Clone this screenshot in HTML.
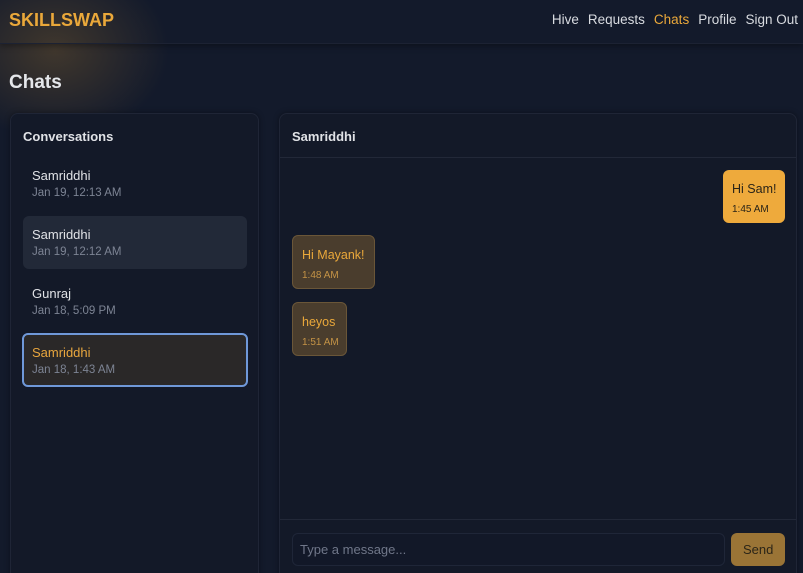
<!DOCTYPE html>
<html><head><style>
*{box-sizing:border-box;margin:0;padding:0}
html,body{width:803px;height:573px;overflow:hidden}
body{background:#131a2b;font-family:"Liberation Sans",sans-serif;position:relative;color:#e5e7eb}
.glow{position:absolute;left:-60px;top:-40px;width:230px;height:180px;border-radius:50%;background:radial-gradient(ellipse at center,rgba(180,130,50,0.28),rgba(180,130,50,0) 70%)}
.nav{position:absolute;left:0;top:0;width:803px;height:44px;border-bottom:1px solid #1c2233;box-shadow:0 2px 6px rgba(0,0,0,0.35)}
.logo{position:absolute;left:9px;top:10px;font-size:18px;font-weight:bold;color:#eaa83a}
.links{position:absolute;right:5px;top:12px;font-size:13.5px;color:#d8dbe0;white-space:nowrap}
.links span{margin-left:9px}
h1{position:absolute;left:9px;top:72px;font-size:19px;color:#e5e7eb}
.panel{position:absolute;top:113px;height:470px;background:#131928;border:1px solid #1f2536;border-radius:8px;box-shadow:0 0 6px rgba(0,0,0,0.4)}
.item{position:absolute;left:12px;width:224px;height:53px;border-radius:6px;padding:11px 9px}
.n{font-size:13px;color:#e0e2e6}
.d{font-size:11.5px;color:#7d8494;margin-top:4px}
.b{position:absolute;border-radius:6px;padding:12px 9px;font-size:12.5px;white-space:nowrap}
.b .t{font-size:10px;margin-top:8px}
</style></head><body>
<div class="glow"></div>
<div class="nav"><div class="logo">SKILLSWAP</div>
<div class="links"><span>Hive</span><span>Requests</span><span style="color:#eaa83a">Chats</span><span>Profile</span><span>Sign Out</span></div></div>
<h1>Chats</h1>
<div class="panel" style="left:10px;width:249px">
<div style="position:absolute;left:12px;top:15px;font-size:13px;font-weight:bold;color:#e0e2e6">Conversations</div>
<div class="item" style="top:43px"><div class="n">Samriddhi</div><div class="d">Jan 19, 12:13 AM</div></div>
<div class="item" style="top:102px;background:#222938"><div class="n">Samriddhi</div><div class="d">Jan 19, 12:12 AM</div></div>
<div class="item" style="top:161px"><div class="n">Gunraj</div><div class="d">Jan 18, 5:09 PM</div></div>
<div class="item" style="top:219px;background:#2a2828;border:2px solid #6f98d8;height:54px;left:11px;width:226px;padding:10px 8px"><div class="n" style="color:#e8a63e">Samriddhi</div><div class="d">Jan 18, 1:43 AM</div></div>
</div>
<div class="panel" style="left:279px;width:518px">
<div style="position:absolute;left:12px;top:15px;font-size:13px;font-weight:bold;color:#e0e2e6">Samriddhi</div>
<div style="position:absolute;left:0;top:43px;width:100%;border-top:1px solid #222838"></div>
<div class="b" style="left:443px;top:56px;width:62px;height:53px;background:#eeaa3c;color:#2a2418">Hi Sam!<div class="t">1:45 AM</div></div>
<div class="b" style="left:12px;top:121px;width:83px;height:54px;background:#4a3d2d;border:1px solid #6a5638;color:#eaa83a">Hi Mayank!<div class="t" style="color:#c49346">1:48 AM</div></div>
<div class="b" style="left:12px;top:188px;width:55px;height:54px;background:#4a3d2d;border:1px solid #6a5638;color:#eaa83a">heyos<div class="t" style="color:#c49346">1:51 AM</div></div>
<div style="position:absolute;left:0;top:405px;width:100%;border-top:1px solid #222838"></div>
<div style="position:absolute;left:12px;top:419px;width:433px;height:33px;border:1px solid #1f2638;border-radius:6px;background:#121828;font-size:13px;color:#707789;padding:8px 7px">Type a message...</div>
<div style="position:absolute;left:451px;top:419px;width:54px;height:33px;border-radius:6px;background:#9a7436;font-size:13px;color:#2b2518;padding:9px 12px">Send</div>
</div>
</body></html>
